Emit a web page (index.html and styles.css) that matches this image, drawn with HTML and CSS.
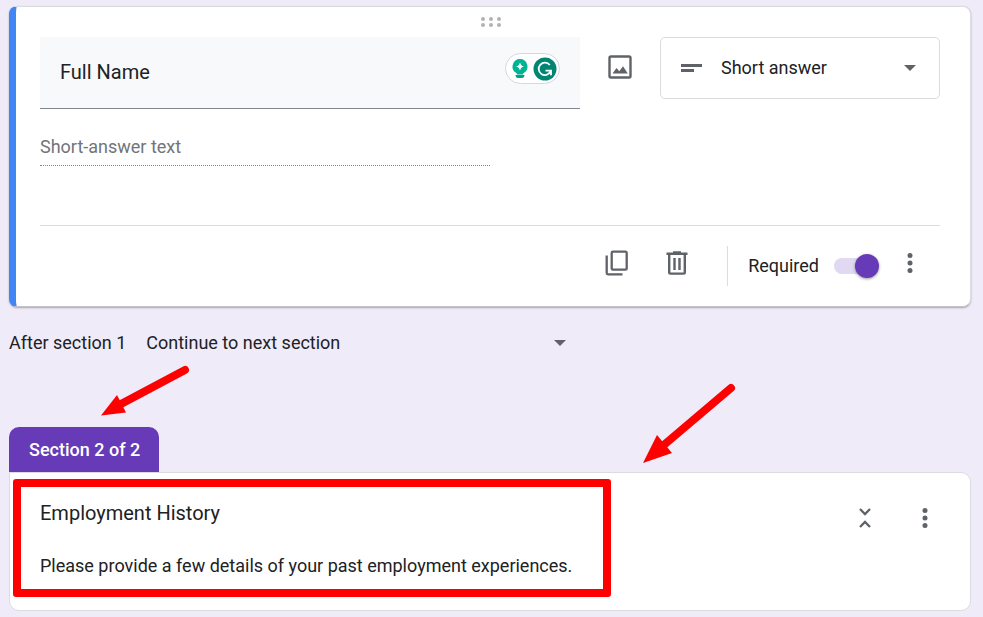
FILE: index.html
```html
<!DOCTYPE html>
<html lang="en">
<head>
  <meta charset="utf-8">
  <meta name="viewport" content="width=device-width, initial-scale=1">
  <title>Form editor</title>
  <link rel="stylesheet" href="styles.css">
</head>
<body>
  <main class="form-editor">

    <!-- Active question -->
    <section class="card question">
      <div class="drag-handle">
        <svg width="20" height="10" viewBox="0 0 20 10" fill="#b3b3b3">
          <circle cx="2" cy="2" r="2"/><circle cx="10" cy="2" r="2"/><circle cx="18" cy="2" r="2"/>
          <circle cx="2" cy="8" r="2"/><circle cx="10" cy="8" r="2"/><circle cx="18" cy="8" r="2"/>
        </svg>
      </div>

      <div class="question-row">
        <div class="title-field">
          <input type="text" class="title-input" value="Full Name" aria-label="Question">
          <div class="writing-badge">
            <svg width="16" height="20" viewBox="0 0 16 20">
              <path d="M8 0a7.500 7.500 0 0 0-4 13.800c.7.500 1 1 1.200 1.700h5.600c.2-.7.500-1.200 1.200-1.700A7.500 7.500 0 0 0 8 0z" fill="#00b394"/>
              <path d="M8 3.500c.8 2.500 1.500 3.200 4 4-2.500.8-3.200 1.500-4 4-.8-2.500-1.500-3.200-4-4 2.500-.8 3.200-1.500 4-4z" fill="#fff"/>
              <path d="M3.500 16h9c0 2-1.100 3-2.600 3H6.100c-1.500 0-2.600-1-2.600-3z" fill="#00a288"/>
            </svg>
            <svg width="24" height="24" viewBox="0 0 24 24">
              <circle cx="12" cy="12" r="11.500" fill="#008573"/>
              <path d="M16.800 8A6.200 6.200 0 1 0 17.500 14.500" fill="none" stroke="#fff" stroke-width="1.800"/>
              <path d="M12.500 13.700h5.500v4.500" fill="none" stroke="#fff" stroke-width="1.800"/>
            </svg>
          </div>
        </div>

        <button type="button" class="icon-button image-button" aria-label="Add image">
          <svg width="24" height="24" viewBox="0 0 24 24">
            <rect x="1.500" y="1.500" width="21" height="21" rx="1.500" fill="none" stroke="#5f6368" stroke-width="2.400"/>
            <path d="M4.500 18.500l4-5.500 2.800 3.300 3.700-5 4.800 7.200z" fill="#5f6368"/>
          </svg>
        </button>

        <div class="select-box type-select">
          <svg class="type-icon" width="21" height="8" viewBox="0 0 21 8" fill="#5f6368">
            <rect width="21" height="3"/><rect y="5" width="13" height="3"/>
          </svg>
          <select aria-label="Question type">
            <option>Short answer</option>
            <option>Paragraph</option>
            <option>Multiple choice</option>
          </select>
        </div>
      </div>

      <input type="text" class="answer-input" placeholder="Short-answer text" aria-label="Short-answer text" disabled>

      <div class="question-footer">
        <div class="footer-icons">
          <button type="button" class="icon-button" aria-label="Duplicate">
            <svg width="24" height="26" viewBox="0 0 24 26" fill="none" stroke="#5f6368" stroke-width="2.300">
              <rect x="6.700" y="1.700" width="15" height="18" rx="1.300"/>
              <path d="M1.700 5.500v17.500a1.300 1.300 0 0 0 1.300 1.300h14.500"/>
            </svg>
          </button>
          <button type="button" class="icon-button" aria-label="Delete">
            <svg width="22" height="24" viewBox="0 0 22 24" fill="none" stroke="#5f6368" stroke-width="2.400">
              <path d="M.5 2.800h21M7 1.500h8M3.200 3v18.300a1.300 1.300 0 0 0 1.300 1.300h13a1.300 1.300 0 0 0 1.300-1.300V3M8.500 7v12M13.500 7v12"/>
            </svg>
          </button>
        </div>
        <label class="required">
          Required
          <input type="checkbox" class="toggle" checked>
        </label>
        <div class="footer-icons">
          <button type="button" class="icon-button" aria-label="More options">
            <svg width="6" height="20" viewBox="0 0 6 20" fill="#5f6368">
              <circle cx="3" cy="2.500" r="2.500"/><circle cx="3" cy="10" r="2.500"/><circle cx="3" cy="17.500" r="2.500"/>
            </svg>
          </button>
        </div>
      </div>
    </section>

    <div class="after-section">
      <label for="next">After section 1</label>
      <div class="select-box next-select">
        <select id="next">
          <option>Continue to next section</option>
          <option>Submit form</option>
        </select>
      </div>
    </div>

    <!-- Section 2 -->
    <section class="form-section">
      <div class="section-tab">Section 2 of 2</div>
      <div class="card section-card">
        <div class="section-fields">
          <input type="text" class="section-title" value="Employment History" aria-label="Section title">
          <input type="text" class="section-description" value="Please provide a few details of your past employment experiences." aria-label="Description">
        </div>
        <div class="section-actions">
          <button type="button" class="icon-button" aria-label="Collapse section">
            <svg width="12" height="20" viewBox="0 0 12 20" fill="none" stroke="#5f6368" stroke-width="2.300">
              <path d="M1 1l5 5 5-5M1 19l5-5 5 5"/>
            </svg>
          </button>
          <button type="button" class="icon-button" aria-label="More options">
            <svg width="6" height="20" viewBox="0 0 6 20" fill="#5f6368">
              <circle cx="3" cy="2.500" r="2.500"/><circle cx="3" cy="10" r="2.500"/><circle cx="3" cy="17.500" r="2.500"/>
            </svg>
          </button>
        </div>
        <div class="highlight"></div>
      </div>

      <svg class="arrow arrow-tab" width="92" height="54" viewBox="0 0 92 54">
        <path d="M84 7L20 41" stroke="#f00" stroke-width="8" stroke-linecap="round"/>
        <path d="M0 52.500L16 32l9 17.500z" fill="#f00"/>
      </svg>
      <svg class="arrow arrow-card" width="96" height="84" viewBox="0 0 96 84">
        <path d="M88 8L22 64" stroke="#f00" stroke-width="8" stroke-linecap="round"/>
        <path d="M0 83L14 55l15 18z" fill="#f00"/>
      </svg>
    </section>

  </main>
</body>
</html>
```
FILE: styles.css
```css
* {
  box-sizing: border-box;
}

body {
  margin: 0;
  background-color: #efebf8;
  color: #202124;
  font-family: Roboto, Arial, sans-serif;
  font-size: 18px;
  line-height: 24px;
}

input,
select,
button {
  font: inherit;
  color: inherit;
  border: none;
  background: none;
  padding: 0;
  margin: 0;
}

svg {
  display: block;
}

.form-editor {
  padding: 6px 12px 6px 9px;
}

.card {
  background-color: #fff;
  border: 1px solid #dadce0;
  border-radius: 10px;
}

.icon-button {
  width: 60px;
  height: 40px;
  display: flex;
  align-items: center;
  justify-content: center;
  cursor: pointer;
}

/* Question card */
.question {
  padding: 0 30px 0 24px;
  border-left: 7px solid #4285f4;
  border-radius: 8px;
  border-bottom-color: #c4c2cc;
  box-shadow: 0 1px 2px rgba(0, 0, 0, 0.3);
}

.drag-handle {
  height: 30px;
  padding-left: 2px;
  display: flex;
  align-items: center;
  justify-content: center;
}

.question-row {
  display: flex;
  align-items: flex-start;
}

.title-field {
  flex: 1;
  position: relative;
}

.title-input {
  width: 100%;
  height: 72px;
  padding: 0 100px 2px 20px;
  background-color: #f8f9fa;
  border-bottom: 1px solid #80868b;
  font-size: 20px;
}

.writing-badge {
  position: absolute;
  top: 16px;
  right: 20px;
  height: 31px;
  padding: 0 2px 0 6px;
  display: flex;
  align-items: center;
  gap: 5px;
  background-color: #fff;
  border: 1px solid #d5d7e5;
  border-radius: 16px;
}

.image-button {
  width: 80px;
  height: 60px;
}

.select-box {
  position: relative;
  display: flex;
  align-items: center;
}

.select-box select {
  flex: 1;
  width: 100%;
  height: 60px;
  appearance: none;
  cursor: pointer;
}

.select-box::after {
  content: "";
  position: absolute;
  right: 23px;
  border: 6px solid transparent;
  border-top-color: #5f6368;
  border-bottom: none;
  pointer-events: none;
}

.type-select {
  width: 280px;
  padding-left: 20px;
  gap: 19px;
  border: 1px solid #dadce0;
  border-radius: 5px;
}

.answer-input {
  display: block;
  width: 50%;
  height: 39px;
  margin-top: 18px;
  border-bottom: 1px dotted #80868b;
}

.answer-input::placeholder {
  color: #70757a;
  opacity: 1;
}

.question-footer {
  display: flex;
  align-items: center;
  justify-content: flex-end;
  height: 81px;
  margin-top: 59px;
  border-top: 1px solid #dadce0;
}

.footer-icons {
  display: flex;
  padding-bottom: 6px;
}

.required {
  display: flex;
  align-items: center;
  gap: 15px;
  height: 40px;
  margin-left: 20px;
  padding-left: 20px;
  border-left: 1px solid #dadce0;
}

.toggle {
  appearance: none;
  position: relative;
  width: 46px;
  height: 16px;
  border-radius: 8px;
  background: linear-gradient(#e1d8f1, #e1d8f1) no-repeat left / 36px;
  cursor: pointer;
}

.toggle::before {
  content: "";
  position: absolute;
  top: -4px;
  right: 1px;
  width: 24px;
  height: 24px;
  border-radius: 50%;
  background-color: #673ab7;
  box-shadow: 0 1px 3px rgba(0, 0, 0, 0.4);
}

.toggle:not(:checked)::before {
  right: 22px;
  background-color: #fafafa;
}

/* Navigation between sections */
.after-section {
  display: flex;
  align-items: center;
  gap: 20px;
  height: 72px;
}

.next-select {
  width: 443px;
}

/* Section header */
.form-section {
  position: relative;
  margin-top: 48px;
}

.section-tab {
  width: fit-content;
  padding: 11px 19px 10px 20px;
  background-color: #673ab7;
  color: #fff;
  border-radius: 10px 10px 0 0;
  font-weight: 500;
}

.section-card {
  position: relative;
  display: flex;
  padding: 20px 15px 25px 30px;
  border-top-left-radius: 0;
}

.section-fields {
  flex: 1;
  display: flex;
  flex-direction: column;
  gap: 12px;
}

.section-title {
  height: 40px;
  font-size: 20px;
}

.section-description {
  height: 40px;
}

.section-actions {
  display: flex;
  padding-top: 5px;
}

.highlight {
  position: absolute;
  top: 6px;
  left: 3px;
  width: 598px;
  height: 118px;
  border: 8px solid #f00;
  border-radius: 3px;
  pointer-events: none;
}

.arrow {
  position: absolute;
  pointer-events: none;
}

.arrow-tab {
  top: -64px;
  left: 92px;
}

.arrow-card {
  top: -47px;
  left: 634px;
}
```
